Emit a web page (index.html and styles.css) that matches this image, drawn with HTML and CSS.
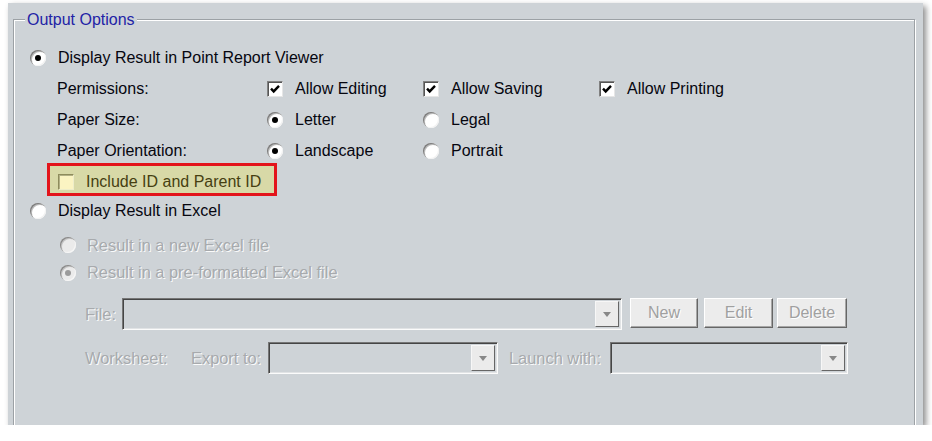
FILE: index.html
```html
<!DOCTYPE html>
<html>
<head>
<meta charset="utf-8">
<link rel="stylesheet" href="styles.css">
</head>
<body>
<div class="panel">
  <div class="group">
    <span class="legend">Output Options</span>

    <div class="row">
      <span class="ctl"><span class="radio on"></span><span>Display Result in Point Report Viewer</span></span>
    </div>

    <div class="row opts">
      <span>Permissions:</span>
      <span class="ctl"><span class="cb"><svg viewBox="0 0 12 12" width="12" height="12"><polyline points="2,5.6 4.7,8.4 10,2.9" fill="none" stroke="#000" stroke-width="2.4"/></svg></span><span>Allow Editing</span></span>
      <span class="ctl"><span class="cb"><svg viewBox="0 0 12 12" width="12" height="12"><polyline points="2,5.6 4.7,8.4 10,2.9" fill="none" stroke="#000" stroke-width="2.4"/></svg></span><span>Allow Saving</span></span>
      <span class="ctl"><span class="cb"><svg viewBox="0 0 12 12" width="12" height="12"><polyline points="2,5.6 4.7,8.4 10,2.9" fill="none" stroke="#000" stroke-width="2.4"/></svg></span><span>Allow Printing</span></span>
    </div>

    <div class="row opts">
      <span>Paper Size:</span>
      <span class="ctl"><span class="radio on"></span><span>Letter</span></span>
      <span class="ctl"><span class="radio"></span><span>Legal</span></span>
    </div>

    <div class="row opts">
      <span>Paper Orientation:</span>
      <span class="ctl"><span class="radio on"></span><span>Landscape</span></span>
      <span class="ctl"><span class="radio"></span><span>Portrait</span></span>
    </div>

    <div class="hl">
      <span class="cb yel"></span><span>Include ID and Parent ID</span>
    </div>

    <div class="row excel">
      <span class="ctl"><span class="radio"></span><span>Display Result in Excel</span></span>
    </div>

    <div class="row sub first">
      <span class="ctl gap11"><span class="radio dis"></span><span class="dis">Result in a new Excel file</span></span>
    </div>
    <div class="row sub">
      <span class="ctl gap11"><span class="radio dis on"></span><span class="dis">Result in a pre-formatted Excel file</span></span>
    </div>

    <div class="frow">
      <span class="dis flabel">File:</span>
      <span class="combo wfile"><span class="dd"></span></span>
      <span class="btn b1">New</span>
      <span class="btn b2">Edit</span>
      <span class="btn b3">Delete</span>
    </div>

    <div class="frow">
      <span class="dis wlabel">Worksheet:</span>
      <span class="dis elabel">Export to:</span>
      <span class="combo wexp"><span class="dd"></span></span>
      <span class="dis llabel">Launch with:</span>
      <span class="combo wlaunch"><span class="dd"></span></span>
    </div>
  </div>
</div>
</body>
</html>
```

FILE: styles.css
```css
* { box-sizing: border-box; }

body {
  margin: 0;
  background: #ffffff;
  font-family: "Liberation Sans", Arial, sans-serif;
  font-size: 16px;
  color: #06060f;
  white-space: nowrap;
}

.panel {
  width: 915px;
  height: 422px;
  margin: 3px 0 0 8px;
  padding: 16px 0 0 5px;
  background: #ced3d7;
  box-shadow: 3px 3px 6px rgba(0, 0, 0, 0.45);
  overflow: hidden;
}

.group {
  position: relative;
  width: 902px;
  height: 440px;
  border: 1px solid #9ca1a5;
  box-shadow: inset 1px 1px 0 #ffffff, 1px 1px 0 #ffffff;
  padding: 22px 0 0 16px;
}

.legend {
  position: absolute;
  top: -9px;
  left: 11px;
  padding: 0 2px;
  background: #ced3d7;
  color: #2323a6;
  line-height: 18px;
}

.row {
  display: flex;
  align-items: center;
  height: 31px;
}

.opts {
  display: grid;
  grid-template-columns: 210px 156px 176px auto;
  margin-left: 27px;
}

.ctl {
  display: flex;
  align-items: center;
  gap: 12px;
}

.gap11 { gap: 11px; }

.radio {
  flex: none;
  width: 16px;
  height: 16px;
  border-radius: 50%;
  background: #ffffff;
  box-shadow: inset 1px 1px 0 #7e7e7e, inset 2px 2px 0 #bcbcbc, inset -1px -1px 0 #f2f2f2;
  display: flex;
  align-items: center;
  justify-content: center;
}

.radio.on::after {
  content: "";
  width: 6px;
  height: 6px;
  border-radius: 50%;
  background: #000000;
}

.radio.dis {
  background: #ebebeb;
  box-shadow: inset 1px 1px 0 #8a8a8a, inset 2px 2px 0 #c4c4c4, inset -1px -1px 0 #f6f6f6;
}

.radio.dis.on::after { background: #9b9b9b; }

.cb {
  flex: none;
  width: 16px;
  height: 16px;
  background: #ffffff;
  border: 1px solid;
  border-color: #808080 #e6e6e6 #e6e6e6 #808080;
  box-shadow: inset 1px 1px 0 #555555;
  display: flex;
  align-items: center;
  justify-content: center;
}

.cb svg { display: block; }

.cb.yel {
  background: #fbf4c2;
  border-color: #8e8c5c #eeedc9 #eeedc9 #8e8c5c;
  box-shadow: inset 1px 1px 0 #b2b084;
}

.hl {
  display: flex;
  align-items: center;
  gap: 12px;
  width: 230px;
  height: 33px;
  margin: -3px 0 0 17px;
  padding: 4px 0 0 8px;
  border: 3px solid #e3141b;
  background: #d8d9a7;
  color: #463f12;
}

.excel { height: 29px; }

.sub {
  margin-left: 30px;
  height: 27px;
}

.sub.first {
  margin-top: 6px;
  height: 28px;
}

.dis {
  font-size: 16.4px;
  color: #a7aaad;
  text-shadow: 1px 1px 0 #fbfbfb;
}

.frow {
  display: flex;
  align-items: center;
  height: 32px;
  margin: 12px 0 0 55px;
}

.flabel { width: 37px; }
.wlabel { width: 106px; }
.elabel { width: 77px; }
.llabel { width: 101px; margin-left: 11px; }

.combo {
  display: flex;
  justify-content: flex-end;
  height: 32px;
  padding: 2px;
  border: 1px solid;
  border-color: #767676 #fbfbfb #fbfbfb #767676;
  box-shadow: inset 1px 1px 0 #454545, inset -1px -1px 0 #e1e3e5;
}

.wfile { width: 500px; }
.wexp { width: 230px; }
.wlaunch { width: 238px; }

.dd {
  width: 24px;
  height: 100%;
  background: #ebebeb;
  border: 1px solid;
  border-color: #f7f7f7 #666666 #666666 #f7f7f7;
  display: flex;
  align-items: center;
  justify-content: center;
}

.dd::after {
  content: "";
  border-left: 4px solid transparent;
  border-right: 4px solid transparent;
  border-top: 5px solid #888888;
}

.btn {
  display: flex;
  align-items: center;
  justify-content: center;
  height: 30px;
  margin-top: -2px;
  background: #ececec;
  border: 1px solid;
  border-color: #ffffff #666666 #666666 #ffffff;
  box-shadow: inset -1px -1px 0 #a6a6a6;
  color: #a0a0a0;
  text-shadow: 1px 1px 0 #ffffff;
}

.b1 { width: 68px; margin-left: 8px; }
.b2 { width: 69px; margin-left: 6px; }
.b3 { width: 70px; margin-left: 4px; }
```
